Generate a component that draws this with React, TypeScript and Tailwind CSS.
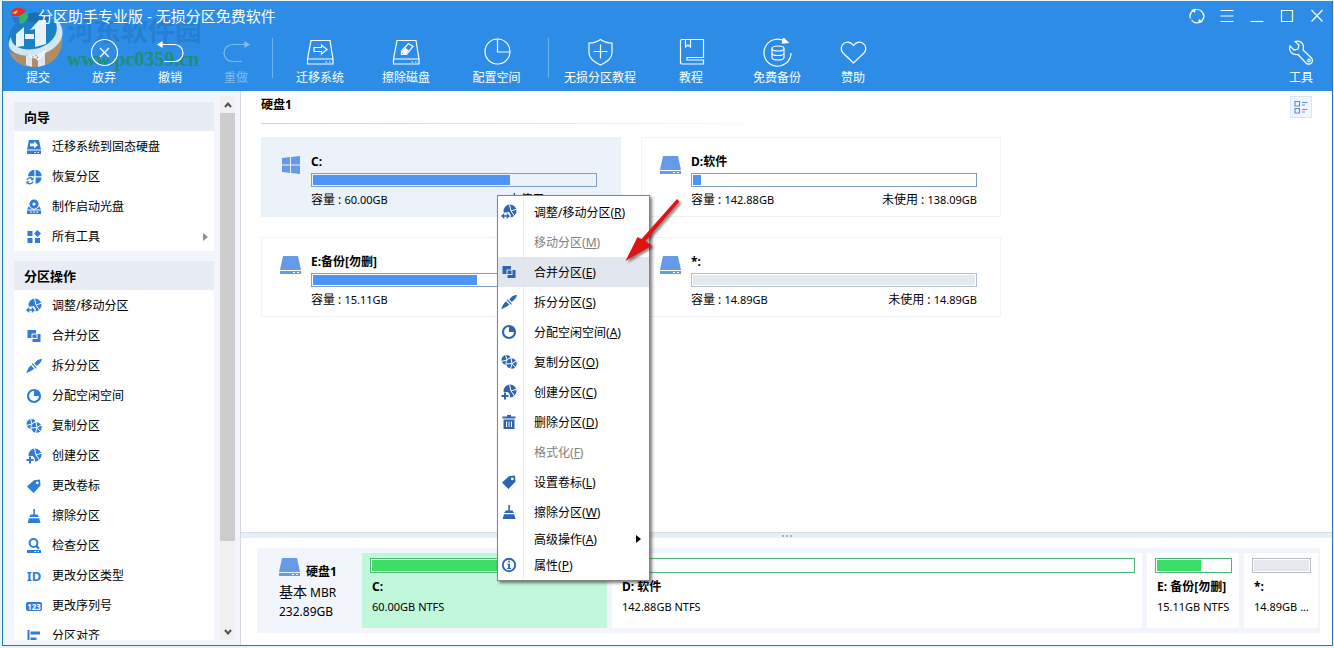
import type { ReactNode } from "react";

/* ---------- small filled icons, shared by the side panel and the menu ---------- */

const glyphs: Record<string, ReactNode> = {
  migrate: (
    <>
      <path fill="currentColor" d="M3 1h10l2 9.500H1z M1 11.500h14V15H1z" />
      <path fill="#fff" d="M4 4.500h4V2.300L12 6 8 9.500V7.200H4z M8.500 13H10v1H8.500z M11.500 13H13v1h-1.500z" />
    </>
  ),
  recover: (
    <>
      <path fill="currentColor" d="M8.400.8V7.300H2A6.500 6.500 0 0 1 8.400.8zM9.600.8a6.500 6.500 0 0 1 6 6.500h-6zM9.600 8.500h6a6.500 6.500 0 0 1-6 6.200z" />
      <path fill="none" stroke="currentColor" strokeWidth="1.300" d="M1 11a3.200 3.200 0 0 1 5.400-1.200M7 12.500a3.200 3.200 0 0 1-5.400 1.200" />
      <path fill="currentColor" d="M7.600 8v3.200H4.400zM.4 15.500v-3.200h3.200z" />
    </>
  ),
  disc: (
    <>
      <path fill="currentColor" fillRule="evenodd" d="M8 .5a4.600 4.600 0 1 1 0 9.200A4.600 4.600 0 0 1 8 .5zm0 3a1.600 1.600 0 1 0 0 3.200 1.600 1.600 0 0 0 0-3.200z" />
      <path fill="currentColor" d="M2.800 7C5 11.500 11 11.500 13.200 7L15 10.600H1zM1 11.400h14V15H1z" />
      <path fill="#fff" d="M4 12.600h1.600v1.200H4zM7.200 12.600h1.600v1.200H7.200zM10.400 12.600H12v1.200h-1.600z" />
    </>
  ),
  tools: <path fill="currentColor" d="M1.500 2h5v5h-5zM1.500 9h5v5h-5zM9 9h5v5H9zM11.500 1 15 4.500 11.500 8 8 4.500z" />,
  adjust: (
    <>
      <circle cx="9" cy="7" r="6.500" fill="currentColor" />
      <path fill="none" stroke="#fff" d="M8.500.5 10 7l6-2M10 7l3.500 5" />
      <path fill="#fff" d="M0 8.500h5l3-.5 2 3.500L8.500 16H0z" />
      <path fill="none" stroke="currentColor" strokeWidth="1.500" d="M2 12h5" />
      <path fill="currentColor" d="M0 12l3.200-3v6zM9 12 5.800 9v6z" />
    </>
  ),
  merge: (
    <>
      <path fill="currentColor" d="M1.500 2H10v3.500H5.500V10h-4z" />
      <path fill="currentColor" d="M14.500 6v8H6.500v-3h5V6z" />
      <path fill="currentColor" d="M6.500 6.500h4V10h-4z" />
    </>
  ),
  split: <path fill="currentColor" d="M16 .8C13 1 10.500 2.500 8.300 5.300l2.400 2.700C13.500 6 15.500 4 16 .8zM6.600 5.200l4.300 4.800-1 .8-4.200-4.700zM5 7.200 8.300 10.800C6 12.700 3 14 .3 15.200 1 12.500 2.500 9.500 5 7.200z" />,
  alloc: (
    <>
      <circle cx="8" cy="8" r="6" fill="none" stroke="currentColor" strokeWidth="2.200" />
      <path fill="currentColor" d="M8 2v6h6a6 6 0 0 0-6-6z" />
    </>
  ),
  copy: (
    <>
      <circle cx="5.500" cy="6" r="5" fill="currentColor" />
      <path fill="none" stroke="#fff" d="M4.500.5 6 6 0 7.500M6 6l4-3" />
      <circle cx="10.500" cy="9.500" r="6" fill="#fff" />
      <circle cx="10.500" cy="9.500" r="5.200" fill="currentColor" />
      <path fill="none" stroke="#fff" d="m10 4 1 5.500 5-3M11 9.500l3.500 4M11 9.500 9.500 15M11 9.500 5 10" />
    </>
  ),
  create: (
    <>
      <circle cx="9" cy="7" r="6.500" fill="currentColor" />
      <path fill="none" stroke="#fff" d="M8.500.5 10 7l6-2M10 7l3.500 5" />
      <path fill="#fff" d="M0 8h7l2 3v5H0z" />
      <path fill="none" stroke="currentColor" strokeWidth="2" d="M.5 12h7M4 8.500v7" />
    </>
  ),
  tag: <path fill="currentColor" fillRule="evenodd" d="M8 2.300 14 1.500 14.500 7.500 7.500 15 1 8.500zM11.300 3.500a1.400 1.400 0 1 0 0 2.800 1.400 1.400 0 0 0 0-2.800z" />,
  wipe: <path fill="currentColor" d="M7.300 1h1.600v5.500h2.600L13 9H3.200l1.500-2.500h2.600zM3 10.200h10.200L14.500 15H1.700z" />,
  check: (
    <>
      <circle cx="7.500" cy="5" r="3.900" fill="none" stroke="currentColor" strokeWidth="2" />
      <path stroke="currentColor" strokeWidth="2.200" d="m10 7.700 3 3" />
      <path fill="currentColor" d="M1 12h14v3H1z" />
      <path fill="#fff" d="M8.500 13H10v1H8.500zM11.500 13H13v1h-1.500z" />
    </>
  ),
  align: <path fill="currentColor" d="M1.500 2h2v13h-2zM4.500 3.500H14v3H4.500zM4.500 9.500h6v3h-6z" />,
  trash: (
    <>
      <path fill="currentColor" d="M6 1h4v1.500h4.500v2h-13v-2H6zM2.500 5.500h11V15h-11z" />
      <path stroke="#fff" d="M5.500 7.500v5.500M8 7.500v5.500M10.500 7.500v5.500" />
    </>
  ),
  info: (
    <>
      <circle cx="8" cy="8" r="6.200" fill="none" stroke="currentColor" strokeWidth="1.900" />
      <path fill="currentColor" d="M7.100 3.800H9v1.800H7.100zM6.300 6.700H9v4.200h1V12H6.200v-1.100h.9V7.800h-.8z" />
    </>
  ),
};

function Glyph({ name }: { name: string }) {
  if (name === "id") return <span className="w-4 text-center text-[13px] font-bold leading-4">ID</span>;
  if (name === "serial")
    return <span className="w-4 rounded-xs bg-current text-center text-[8px] font-bold leading-[9px]"><span className="text-white">123</span></span>;
  return (
    <svg viewBox="0 0 16 16" className="size-4 shrink-0" aria-hidden="true">
      {glyphs[name]}
    </svg>
  );
}

/* ---------- toolbar ---------- */

const toolIcons: Record<string, ReactNode> = {
  submit: <path d="m9 17 5 5 8-9" />,
  discard: (
    <>
      <circle cx="14.500" cy="14.500" r="13" />
      <path d="m10 10 9 9M19 10l-9 9" />
    </>
  ),
  undo: (
    <>
      <path d="M3 6.500h15.500a8.500 8.500 0 0 1 0 17H8" />
      <path fill="currentColor" d="M2 6.500 6 4v5z" />
    </>
  ),
  redo: (
    <>
      <path d="M25 6.500H10.500a8.500 8.500 0 0 0 0 17H20" />
      <path fill="currentColor" d="M27 6.500 23 4v5z" />
    </>
  ),
  migrate: (
    <>
      <path d="M5 2.500h19l3 18.500v5H1.500v-5zM1.500 21H27" />
      <path d="M8 9.500h7.500V7l5.500 4.500-5.500 4.500v-2.500H8zM19.500 24h1.500M23 24h1.500" />
    </>
  ),
  erase: (
    <>
      <path d="M5 2.500h19l3 18.500v5H1.500v-5zM1.500 21H27M19.500 24h1.500M23 24h1.500" />
      <path d="m9.500 13 7-7.500 4.500 3-6.500 8h-5z" />
      <path fill="currentColor" d="m10.500 14 3-3.500 2.500 2-2.500 3h-2z" />
    </>
  ),
  space: (
    <>
      <circle cx="15.500" cy="13.500" r="12.500" />
      <path d="M15.500 1v13H28" />
    </>
  ),
  shield: <path d="M14.500 1.500C18 4 22 5 26 5v10c0 5-5 9-11.500 12C8 24 3 20 3 15V5c4 0 8-1 11.500-3.500zM7.500 13.500h14M14.500 6.500v14" />,
  book: <path d="M5 1.500h21.500v18H10v2.500h16.500v4H5a1.500 1.500 0 0 1-1.500-1.500V3A1.500 1.500 0 0 1 5 1.500zM8.500 1.500V9l2.500-2 2.500 2V1.500" />,
  backup: (
    <>
      <path d="M28 15A13.500 13.500 0 1 1 22 3.500" />
      <path fill="currentColor" d="m20.500 0 4.500 4.500-5.500.5z" />
      <ellipse cx="15" cy="10.500" rx="6" ry="2.500" />
      <path d="M9 10.500v9c0 1.400 2.700 2.500 6 2.500s6-1.100 6-2.500v-9M9 15c0 1.400 2.700 2.500 6 2.500s6-1.100 6-2.500" />
    </>
  ),
  heart: <path d="M14.500 25 4 15c-6-6.500 4-16 10.500-7.500C21-1 31 8.500 25 15z" />,
  wrench: (
    <>
      <path d="M8 3.500c4-1.500 8.500 1 8.500 5.500 0 1-.3 2-.5 3l8.500 8a3.600 3.600 0 0 1-5.500 5l-8-8.500C5 17.500 1.500 13 3 8l4 4 4-1 1-4z" />
      <circle cx="22" cy="22.500" r="1.300" />
    </>
  ),
};

function Tool({ icon, label, width, dim }: { icon: string; label: string; width: string; dim?: boolean }) {
  return (
    <button className={`${width} flex flex-col items-center gap-[3px] ${dim ? "text-[#7dbcf2]" : "text-white"}`} disabled={dim}>
      <svg viewBox="0 0 29 29" className="size-[29px]" fill="none" stroke="currentColor" strokeWidth="1.200" aria-hidden="true">
        {toolIcons[icon]}
      </svg>
      <span className="text-xs leading-4 whitespace-nowrap">{label}</span>
    </button>
  );
}

function Divider() {
  return <div className="mx-[3px] h-10 w-px bg-[#6cb4ef]" />;
}

function WatermarkText() {
  return (
    <div className="pointer-events-none absolute left-16 top-3.5 flex flex-col">
      <span className="text-[27px] font-bold leading-8 text-[#277fd3]">河东软件园</span>
      <span className="font-[Liberation_Serif,serif] text-xl font-bold leading-6 text-[#218f72]">www.pc0359.cn</span>
    </div>
  );
}

function WatermarkLogo() {
  return (
    <svg viewBox="0 0 60 60" className="pointer-events-none absolute left-0.5 top-2 size-[60px]" aria-hidden="true">
      <path fill="#1d7fc6" d="M3 30C6 14 19 6 31 7c10 0 18 5 23 12l-4 14-22 10L5 39z" />
      <path fill="#1a6fb5" d="M12 10C22 2 40 1 46 9l-10 5-16-2z" />
      <path fill="#b08d66" d="M4 42c16 10 42 4 53-15 2 16-8 30-26 31C17 59 7 52 4 42z" />
      <path fill="#d3e6f6" d="M48 8c10 6 13 18 5 27C42 48 17 51 6 41c-3-3-3-8 0-13 0 14 25 17 39 5 8-7 9-17 3-25z" />
      <path fill="#e6f1fa" d="M11 25l8-7v19l-8 1zM20 25h9v5h-9zM30 20l-5 1 9-10h7v24l-11 3z" />
      <path fill="#dbe9f5" d="M21 47h6v11l-6-2zM33 46l7-3v13l-7 2z" />
      <path fill="none" stroke="#fff" d="m24 46 5 3 11-7" />
    </svg>
  );
}

const windowButtons = [
  {
    label: "刷新",
    shape: (
      <>
        <path d="M1.500 10.500A6.500 6.500 0 0 1 4 2.800M7.500 1.500A6.500 6.500 0 0 1 14.500 7.500M14.500 5.500A6.700 6.700 0 0 1 12.500 13M9 14.700A6.500 6.500 0 0 1 2.500 12" />
        <path fill="currentColor" stroke="none" d="m2 2 5-1.500-1 4.500zM14 14l-5 1.500 1-4.500z" />
      </>
    ),
  },
  { label: "菜单", shape: <path d="M1.500 2.500h13M1.500 8h13M1.500 13.500h13" /> },
  { label: "最小化", shape: <path d="M1.500 13.500h13" /> },
  { label: "最大化", shape: <path d="M2.500 2.500h11v11h-11z" /> },
  { label: "关闭", shape: <path d="m2.500 2 11 11.500M13.500 2l-11 11.500" /> },
];

function Header() {
  return (
    <header className="relative flex h-[90px] shrink-0 flex-col bg-[#2d8de6] text-white">
      <WatermarkText />
      <WatermarkLogo />
      <div className="relative flex h-[30px] items-center justify-between pl-[7px] pr-[7px]">
        <div className="flex items-center gap-2.5">
          <svg viewBox="0 0 18 18" className="size-[18px]" aria-hidden="true">
            <path fill="#df2e2e" d="M1 6C2 0 12-1 16 4L10 9H2z" />
            <path fill="#f4d23c" d="m2 6 6-3-2 4z" />
            <path fill="#35b36b" d="M9 9l8-4c3 6-1 11-7 12z" />
            <path fill="#2e75c8" d="M2 10h7v7c-4 0-6-3-7-7z" />
          </svg>
          <h1 className="text-[15px] leading-5">分区助手专业版 - 无损分区免费软件</h1>
        </div>
        <div className="flex items-center gap-3.5">
          {windowButtons.map((b) => (
            <button key={b.label} aria-label={b.label}>
              <svg viewBox="0 0 16 16" className="size-4" fill="none" stroke="currentColor" strokeWidth="1.200">
                {b.shape}
              </svg>
            </button>
          ))}
        </div>
      </div>
      <div className="relative flex flex-1 items-start pl-0.5 pt-[7px]">
        <Tool icon="submit" label="提交" width="w-[66px]" />
        <Tool icon="discard" label="放弃" width="w-[66px]" />
        <Tool icon="undo" label="撤销" width="w-[66px]" />
        <Tool icon="redo" label="重做" width="w-[66px]" dim />
        <Divider />
        <Tool icon="migrate" label="迁移系统" width="w-[88px]" />
        <Tool icon="erase" label="擦除磁盘" width="w-[84px]" />
        <Tool icon="space" label="配置空间" width="w-[97px]" />
        <Divider />
        <Tool icon="shield" label="无损分区教程" width="w-24" />
        <Tool icon="book" label="教程" width="w-[86px]" />
        <Tool icon="backup" label="免费备份" width="w-[86px]" />
        <Tool icon="heart" label="赞助" width="w-[66px]" />
        <div className="flex-1" />
        <Tool icon="wrench" label="工具" width="w-[62px]" />
      </div>
    </header>
  );
}

/* ---------- side panel ---------- */

const wizards = [
  ["migrate", "迁移系统到固态硬盘"],
  ["recover", "恢复分区"],
  ["disc", "制作启动光盘"],
  ["tools", "所有工具"],
];

const operations = [
  ["adjust", "调整/移动分区"],
  ["merge", "合并分区"],
  ["split", "拆分分区"],
  ["alloc", "分配空闲空间"],
  ["copy", "复制分区"],
  ["create", "创建分区"],
  ["tag", "更改卷标"],
  ["wipe", "擦除分区"],
  ["check", "检查分区"],
  ["id", "更改分区类型"],
  ["serial", "更改序列号"],
  ["align", "分区对齐"],
];

function Group({ title, items }: { title: string; items: string[][] }) {
  return (
    <section className="bg-white">
      <h2 className="h-[29px] bg-[#e8edf5] pl-2.5 text-[13px] font-bold leading-[30px]">{title}</h2>
      <ul>
        {items.map(([icon, label]) => (
          <li key={label}>
            <button className="flex h-[30px] w-full items-center gap-2.5 pl-3 pr-1.5 pt-0.5 text-xs">
              <span className="flex text-[#2f7bd8]">
                <Glyph name={icon} />
              </span>
              {label}
              {icon === "tools" && <span className="ml-auto border-y-4 border-l-[5px] border-y-transparent border-l-[#8490a0]" />}
            </button>
          </li>
        ))}
      </ul>
    </section>
  );
}

function Sidebar() {
  return (
    <aside className="flex w-[238px] shrink-0 border-r border-[#d3d9e2] bg-[#f2f6fc] pb-[5px] pr-[5px]">
      <nav className="flex flex-1 flex-col gap-2.5 overflow-hidden pl-[11px] pr-1.5 pt-[11px]">
        <Group title="向导" items={wizards} />
        <Group title="分区操作" items={operations} />
      </nav>
      <div className="mt-[5px] flex w-[15px] flex-col items-center bg-[#f0f0f0]">
        <button aria-label="向上滚动" className="flex h-[17px] items-center">
          <svg viewBox="0 0 8 8" className="size-2" fill="none" stroke="#505050" strokeWidth="2"><path d="m1 6 3-3.500L7 6" /></svg>
        </button>
        <div className="flex w-full flex-1 flex-col">
          <div className="basis-[84%] bg-[#cdcdcd]" />
        </div>
        <button aria-label="向下滚动" className="flex h-[17px] items-center">
          <svg viewBox="0 0 8 8" className="size-2" fill="none" stroke="#505050" strokeWidth="2"><path d="m1 2 3 3.500L7 2" /></svg>
        </button>
      </div>
    </aside>
  );
}

/* ---------- partitions ---------- */

function DriveIcon() {
  return (
    <svg viewBox="0 0 21 18" className="h-[18px] w-[21px] shrink-0" aria-hidden="true">
      <path fill="#659ae9" d="M3 0h15l3 14H0zM0 15h21v3H0z" />
      <path fill="#fff" d="M13 16h2v1h-2zM17 16h2v1h-2z" />
    </svg>
  );
}

function WindowsIcon() {
  return (
    <svg viewBox="0 0 21 18" className="h-[18px] w-[21px] shrink-0" aria-hidden="true">
      <path fill="#659ae9" d="M2 2 10 1V8.500H2zM11 .9 20 0v8.500h-9zM2 9.500h8V17l-8-1zM11 9.500h9V18l-9-.9z" />
    </svg>
  );
}

type Card = { name: string; size: string; free?: string; used: number; windows?: boolean; unformatted?: boolean };

const cards: Card[] = [
  { name: "C:", size: "60.00GB", free: "17.94GB", used: 70, windows: true },
  { name: "D:软件", size: "142.88GB", free: "138.09GB", used: 3 },
  { name: "E:备份[勿删]", size: "15.11GB", used: 58 },
  { name: "*:", size: "14.89GB", free: "14.89GB", used: 0, unformatted: true },
];

function PartitionCard({ card }: { card: Card }) {
  return (
    <article className={`flex h-20 gap-2.5 border pl-[18px] pr-[23px] pt-4 ${card.windows ? "border-[#ecf2f9] bg-[#ecf2f9]" : "border-[#f0f2f5] bg-white"}`}>
      <div className="pt-0.5">{card.windows ? <WindowsIcon /> : <DriveIcon />}</div>
      <div className="flex-1">
        <h3 className="text-xs font-bold leading-4">{card.name}</h3>
        <div className={`mt-[3px] h-3.5 border p-px ${card.unformatted ? "border-[#b4bfcc]" : "border-[#7f9fc8]"}`}>
          <div className={`h-full ${card.unformatted ? "bg-[#e4e8ef]" : "bg-[#4d94f7]"}`} style={{ width: card.unformatted ? "100%" : `${card.used}%` }} />
        </div>
        <p className="mt-[5px] flex justify-between text-xs leading-4">
          <span>
            容量 : <span className="text-[11px]">{card.size}</span>
          </span>
          {card.free && (
            <span>
              未使用 : <span className="text-[11px]">{card.free}</span>
            </span>
          )}
        </p>
      </div>
    </article>
  );
}

function Slice({ name, info, used, className, bar }: { name: string; info: string; used: number; className: string; bar: string }) {
  return (
    <div className={`flex flex-col overflow-hidden pl-2 pr-[7px] pt-[5px] ${className}`}>
      <div className={`h-[15px] border p-px ${bar}`}>
        <div className="h-full bg-current" style={{ width: `${used}%` }} />
      </div>
      <h3 className="mt-1.5 pl-0.5 text-xs font-bold leading-4 whitespace-nowrap">{name}</h3>
      <p className="mt-1 pl-0.5 text-[11px] leading-4 whitespace-nowrap">{info}</p>
    </div>
  );
}

function DiskMap() {
  const green = "border-[#4fb878] text-[#3bdd66]";
  return (
    <section className="flex h-[107px] shrink-0 pb-3 pl-4 pr-3 pt-2.5">
      <div className="flex flex-1 bg-[#f2f6fc] py-[5px] pr-0.5">
        <div className="w-[105px] pl-[22px] pt-[5px]">
          <div className="flex items-start gap-1.5">
            <DriveIcon />
            <strong className="pt-1.5 text-xs leading-4">硬盘1</strong>
          </div>
          <p className="mt-0.5 text-xs leading-5"><span className="text-sm leading-5">基本</span> MBR</p>
          <p className="text-xs leading-[18px]">232.89GB</p>
        </div>
        <div className="flex min-w-0 flex-1 gap-[5px]">
          <Slice name="C:" info="60.00GB NTFS" used={70} className="w-[245px] bg-[#c1f7db]" bar={`bg-white ${green}`} />
          <Slice name="D: 软件" info="142.88GB NTFS" used={3} className="flex-1 bg-white" bar={green} />
          <Slice name="E: 备份[勿删]" info="15.11GB NTFS" used={60} className="w-[92px] bg-white" bar={green} />
          <Slice name="*:" info="14.89GB ..." used={100} className="w-[74px] bg-white" bar="border-[#b9bdc6] text-[#e6e8ef]" />
        </div>
      </div>
    </section>
  );
}

/* ---------- context menu ---------- */

const menu = [
  { icon: "adjust", text: "调整/移动分区", key: "R" },
  { text: "移动分区", key: "M", off: true },
  { icon: "merge", text: "合并分区", key: "E", active: true },
  { icon: "split", text: "拆分分区", key: "S" },
  { icon: "alloc", text: "分配空闲空间", key: "A" },
  { icon: "copy", text: "复制分区", key: "O" },
  { icon: "create", text: "创建分区", key: "C" },
  { icon: "trash", text: "删除分区", key: "D" },
  { text: "格式化", key: "F", off: true },
  { icon: "tag", text: "设置卷标", key: "L" },
  { icon: "wipe", text: "擦除分区", key: "W" },
  { text: "高级操作", key: "A", more: true },
  { icon: "info", text: "属性", key: "P" },
];

function ContextMenu() {
  return (
    <div role="menu" className="absolute left-64 top-[104px] w-[153px] border border-[#858585] bg-white py-px shadow-[2px_2px_3px_rgba(0,0,0,0.5)]">
      {menu.map((m) => (
        <button
          key={m.text}
          role="menuitem"
          disabled={m.off}
          className={`flex w-full items-stretch text-left text-xs ${m.more ? "h-6" : m.icon === "info" ? "h-7" : "h-[30px]"} ${m.off ? "text-[#808080]" : "text-black"} ${m.active ? "bg-[#e2e7ef]" : ""}`}
        >
          <span className={`flex w-[26px] items-center pl-[3px] text-[#2c65b4] ${m.active ? "" : "border-r border-[#e3ebf5]"}`}>
            {m.icon && <Glyph name={m.icon} />}
          </span>
          <span className="flex items-center pl-2.5 pt-0.5">
            <span>
              {m.text}(<u>{m.key}</u>)
            </span>
          </span>
          {m.more && <span className="my-auto ml-auto mr-2 border-y-4 border-l-[5px] border-y-transparent border-l-black" />}
        </button>
      ))}
    </div>
  );
}

function PointerArrow() {
  return (
    <svg viewBox="0 0 64 72" className="pointer-events-none absolute left-[381px] top-[104px] h-[72px] w-16 drop-shadow-[2px_2px_1px_rgba(0,0,0,0.45)]" aria-hidden="true">
      <path fill="#e01212" d="M55 4 57.500 6.500 23.500 46 30 50.500 3.500 66 15.500 42l4 2z" />
    </svg>
  );
}

export default function App() {
  return (
    <div className="flex h-screen flex-col bg-[#e6f6f8] pb-0.5 pl-0.5 pr-px pt-px font-['Noto_Sans','Noto_Sans_CJK_SC',sans-serif] text-black">
      <div className="flex min-h-0 flex-1 flex-col border-x border-b border-[#2478b4] bg-white">
        <Header />
        <div className="flex min-h-0 flex-1">
          <Sidebar />
          <main className="relative flex min-w-0 flex-1 flex-col">
            <section className="flex-1 px-5 pt-[5px]">
              <div className="flex items-start justify-between">
                <h2 className="text-xs font-bold leading-[18px]">硬盘1</h2>
                <button aria-label="切换视图" className="border border-[#dbe4f2] bg-[#f2f6fc] p-0.5">
                  <svg viewBox="0 0 16 16" className="size-4" fill="none" stroke="#5f8fce" strokeWidth="1.200">
                    <path d="M2 2.500h4.500V7H2zM2 9.500h4.500V14H2zM9 3.500h5.500M9 6h3M9 10.500h5.500M9 13h3" />
                  </svg>
                </button>
              </div>
              <div className="mt-[5px] h-px w-1/2 bg-linear-to-r from-[#cfcfcf] to-white" />
              <div className="mt-[13px] grid max-w-[740px] grid-cols-2 gap-5">
                {cards.map((c) => (
                  <PartitionCard key={c.name} card={c} />
                ))}
              </div>
            </section>
            <div className="flex h-1.5 shrink-0 items-center justify-center gap-0.5 border-t border-[#d5dde8] bg-[#e9eff6]">
              <i className="size-0.5 bg-[#a9b4c2]" />
              <i className="size-0.5 bg-[#a9b4c2]" />
              <i className="size-0.5 bg-[#a9b4c2]" />
            </div>
            <DiskMap />
            <ContextMenu />
            <PointerArrow />
          </main>
        </div>
      </div>
    </div>
  );
}
